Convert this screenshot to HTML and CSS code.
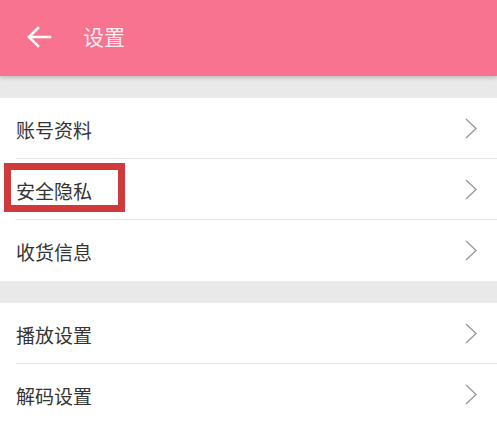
FILE: index.html
```html
<!DOCTYPE html>
<html lang="zh">
<head>
<meta charset="utf-8">
<link rel="stylesheet" href="styles.css">
</head>
<body>
<header class="topbar">
  <svg class="back" width="26" height="22" viewBox="0 0 26 22"><path d="M24 11H3M12 2L3 11l9 9" fill="none" stroke="#fff" stroke-width="2.6" stroke-linecap="square"/></svg>
  <span class="title">设置</span>
</header>
<div class="gap"></div>
<ul class="group">
  <li class="row"><span>账号资料</span><svg class="chev" width="12" height="21" viewBox="0 0 12 21"><path d="M1 1l10 9.5L1 20" fill="none" stroke="#9a9a9a" stroke-width="1.4"/></svg></li>
  <li class="row"><span class="mark">安全隐私</span><svg class="chev" width="12" height="21" viewBox="0 0 12 21"><path d="M1 1l10 9.5L1 20" fill="none" stroke="#9a9a9a" stroke-width="1.4"/></svg></li>
  <li class="row"><span>收货信息</span><svg class="chev" width="12" height="21" viewBox="0 0 12 21"><path d="M1 1l10 9.5L1 20" fill="none" stroke="#9a9a9a" stroke-width="1.4"/></svg></li>
</ul>
<div class="gap"></div>
<ul class="group">
  <li class="row"><span>播放设置</span><svg class="chev" width="12" height="21" viewBox="0 0 12 21"><path d="M1 1l10 9.5L1 20" fill="none" stroke="#9a9a9a" stroke-width="1.4"/></svg></li>
  <li class="row"><span>解码设置</span><svg class="chev" width="12" height="21" viewBox="0 0 12 21"><path d="M1 1l10 9.5L1 20" fill="none" stroke="#9a9a9a" stroke-width="1.4"/></svg></li>
</ul>
</body>
</html>
```
FILE: styles.css
```css
*, *::before, *::after { box-sizing: border-box; }
html, body { margin: 0; padding: 0; }
body {
  background: #e9e9e9;
  font-family: "Noto Sans CJK SC", "Noto Sans", sans-serif;
  color: #333;
  width: 497px;
  height: 422px;
  overflow: hidden;
}
.topbar {
  position: relative;
  z-index: 2;
  height: 76px;
  background: #f7738f;
  display: flex;
  align-items: center;
  padding-left: 26px;
  box-shadow: 0 2px 4px rgba(0,0,0,0.18);
}
.back { flex: none; margin-top: -2px; }
.title {
  margin-left: 31px;
  color: #fdeef2;
  font-size: 21px;
  line-height: 1;
  margin-top: -3px;
}
.gap { height: 22px; }
.group {
  list-style: none;
  margin: 0;
  padding: 0 0 0 16px;
  background: #fff;
}
.row {
  height: 61px;
  display: flex;
  align-items: center;
  justify-content: space-between;
  padding-right: 20px;
  border-bottom: 1px solid #e6e6e6;
  font-size: 19px;
  position: relative;
}
.row:last-child { border-bottom: none; }
.row span { line-height: 1; margin-top: 2px; }
.chev { flex: none; }
.mark::before {
  content: "";
  position: absolute;
  left: -12px;
  top: 4px;
  width: 121px;
  height: 49px;
  border: 7px solid #d13a3b;
}
```
